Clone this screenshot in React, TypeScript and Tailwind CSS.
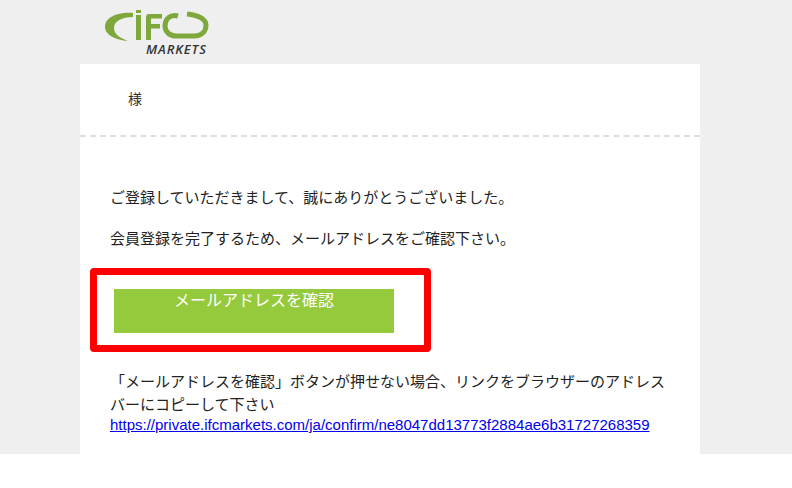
const jp = "font-['Liberation_Sans','Noto_Sans_CJK_JP',sans-serif]";

const Logo = () => (
  <div className="relative h-[64px] w-[104px]">
    <svg width="104" height="64" viewBox="105 0 104 64">
      <path
        d="M133 13 C118 12 105 17 105 27 C105 35 116 40 128 41 C120 38 114 34 114 28 C114 21 122 17 133 17 Z"
        fill="#7fa83c"
      />
      <path d="M136 10 H141 V13 H136 Z M136 15 H141 V40 H136 Z" fill="#7fa83c" />
      <path d="M146 40 V17 Q146 14 149 14 H162 V18.5 H151 V24 H160 V28.5 H151 V40 Z" fill="#7fa83c" />
      <path
        d="M178 16 C170 14 165 19 165 26 C165 32 170 36 176 36 H194 C202 36 206 31 206 25 C206 19 198 15 187 14"
        fill="none"
        stroke="#7fa83c"
        strokeWidth="5"
      />
    </svg>
    <span className="absolute left-[41px] top-[41px] text-[13px] font-semibold italic leading-[16px] tracking-[0.9px] text-[#333333] font-['Open_Sans',sans-serif]">
      MARKETS
    </span>
  </div>
);

export default function App() {
  return (
    <div className={`flex h-[488px] w-[792px] flex-col overflow-hidden bg-white ${jp}`}>
      <div className="flex h-[454px] flex-col bg-[#efefef] px-[80px]">
        <div className="flex pl-[25px]">
          <Logo />
        </div>
        <div className="flex w-[620px] flex-1 flex-col bg-white">
          <div className="h-[73px] border-b-2 border-dashed border-[#dddddd] pl-[48px] pt-[25px] text-[14px] leading-[20px] text-[#333333]">
            様
          </div>
          <div className="flex flex-col px-[30px] pt-[51px] text-[15px] leading-[20px] text-[#222222]">
            <p>ご登録していただきまして、誠にありがとうございました。</p>
            <p className="mt-[21px]">会員登録を完了するため、メールアドレスをご確認下さい。</p>
            <div className="mt-[40px] flex pl-[4px]">
              <div className="relative h-[44px] w-[280px] bg-[#96ca3d] text-center text-[16px] leading-[24px] text-white">
                メールアドレスを確認
                <div className="absolute -left-[24px] -top-[21px] h-[84px] w-[341px] rounded-[4px] border-[7px] border-[#ff0000]" />
              </div>
            </div>
            <p className="mt-[37px] leading-[23px]">
              「メールアドレスを確認」ボタンが押せない場合、リンクをブラウザーのアドレスバーにコピーして下さい
            </p>
            <a href="#" className="-mt-px block text-[#0000ee] underline">
              https://private.ifcmarkets.com/ja/confirm/ne8047dd13773f2884ae6b31727268359
            </a>
          </div>
        </div>
      </div>
    </div>
  );
}
